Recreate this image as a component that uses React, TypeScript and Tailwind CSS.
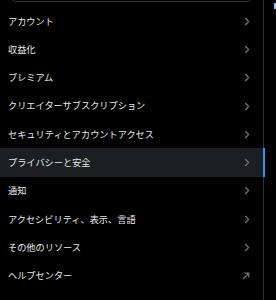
import React from "react";

// 設定メニュー項目
const items = [
  { label: "アカウント" },
  { label: "収益化" },
  { label: "プレミアム" },
  { label: "クリエイターサブスクリプション" },
  { label: "セキュリティとアカウントアクセス" },
  { label: "プライバシーと安全", active: true },
  { label: "通知" },
  { label: "アクセシビリティ、表示、言語" },
  { label: "その他のリソース" },
  { label: "ヘルプセンター", external: true },
];

function Chevron() {
  return (
    <svg width="6" height="9" viewBox="0 0 6 9" fill="none">
      <path d="M1.2 1 L4.6 4.5 L1.2 8" stroke="#71767b" strokeWidth="1.2" />
    </svg>
  );
}

function ExternalArrow() {
  return (
    <svg width="8" height="8" viewBox="0 0 8 8" fill="none">
      <path d="M1 7 L6.5 1.5 M2.5 1.2 H6.8 V5.5" stroke="#71767b" strokeWidth="1.2" />
    </svg>
  );
}

export default function App() {
  return (
    <div
      className="flex h-[300px] w-[276px] overflow-hidden bg-black text-[#e7e9ea]"
      style={{ fontFamily: '"Noto Sans CJK JP", "Noto Sans", sans-serif' }}
    >
      {/* 左側: 設定リスト */}
      <div className="flex w-[264px] flex-col border-r border-[#2f3336]">
        <div className="mx-[10px] -mt-[6px] h-[8px] rounded-b-[6px] border border-[#2f3336]" />
        <ul className="mt-[5px] flex flex-col">
          {items.map((item) => (
            <li
              key={item.label}
              className={`relative flex h-[28.3px] items-center justify-between pl-[8px] pr-[13px] text-[9.2px] leading-none ${
                item.active ? "bg-[#1c1e22]" : ""
              }`}
            >
              <span>{item.label}</span>
              {item.external ? <ExternalArrow /> : <Chevron />}
              {item.active && (
                <span className="absolute -right-[2px] top-0 h-full w-[2px] bg-[#1d9bf0]" />
              )}
            </li>
          ))}
        </ul>
      </div>
      {/* 右側: 見切れたパネル */}
      <div className="flex-1">
        <div className="ml-[10px] mt-[3px] h-[6px] w-[2px] bg-[#8ecdf8]" />
      </div>
    </div>
  );
}
